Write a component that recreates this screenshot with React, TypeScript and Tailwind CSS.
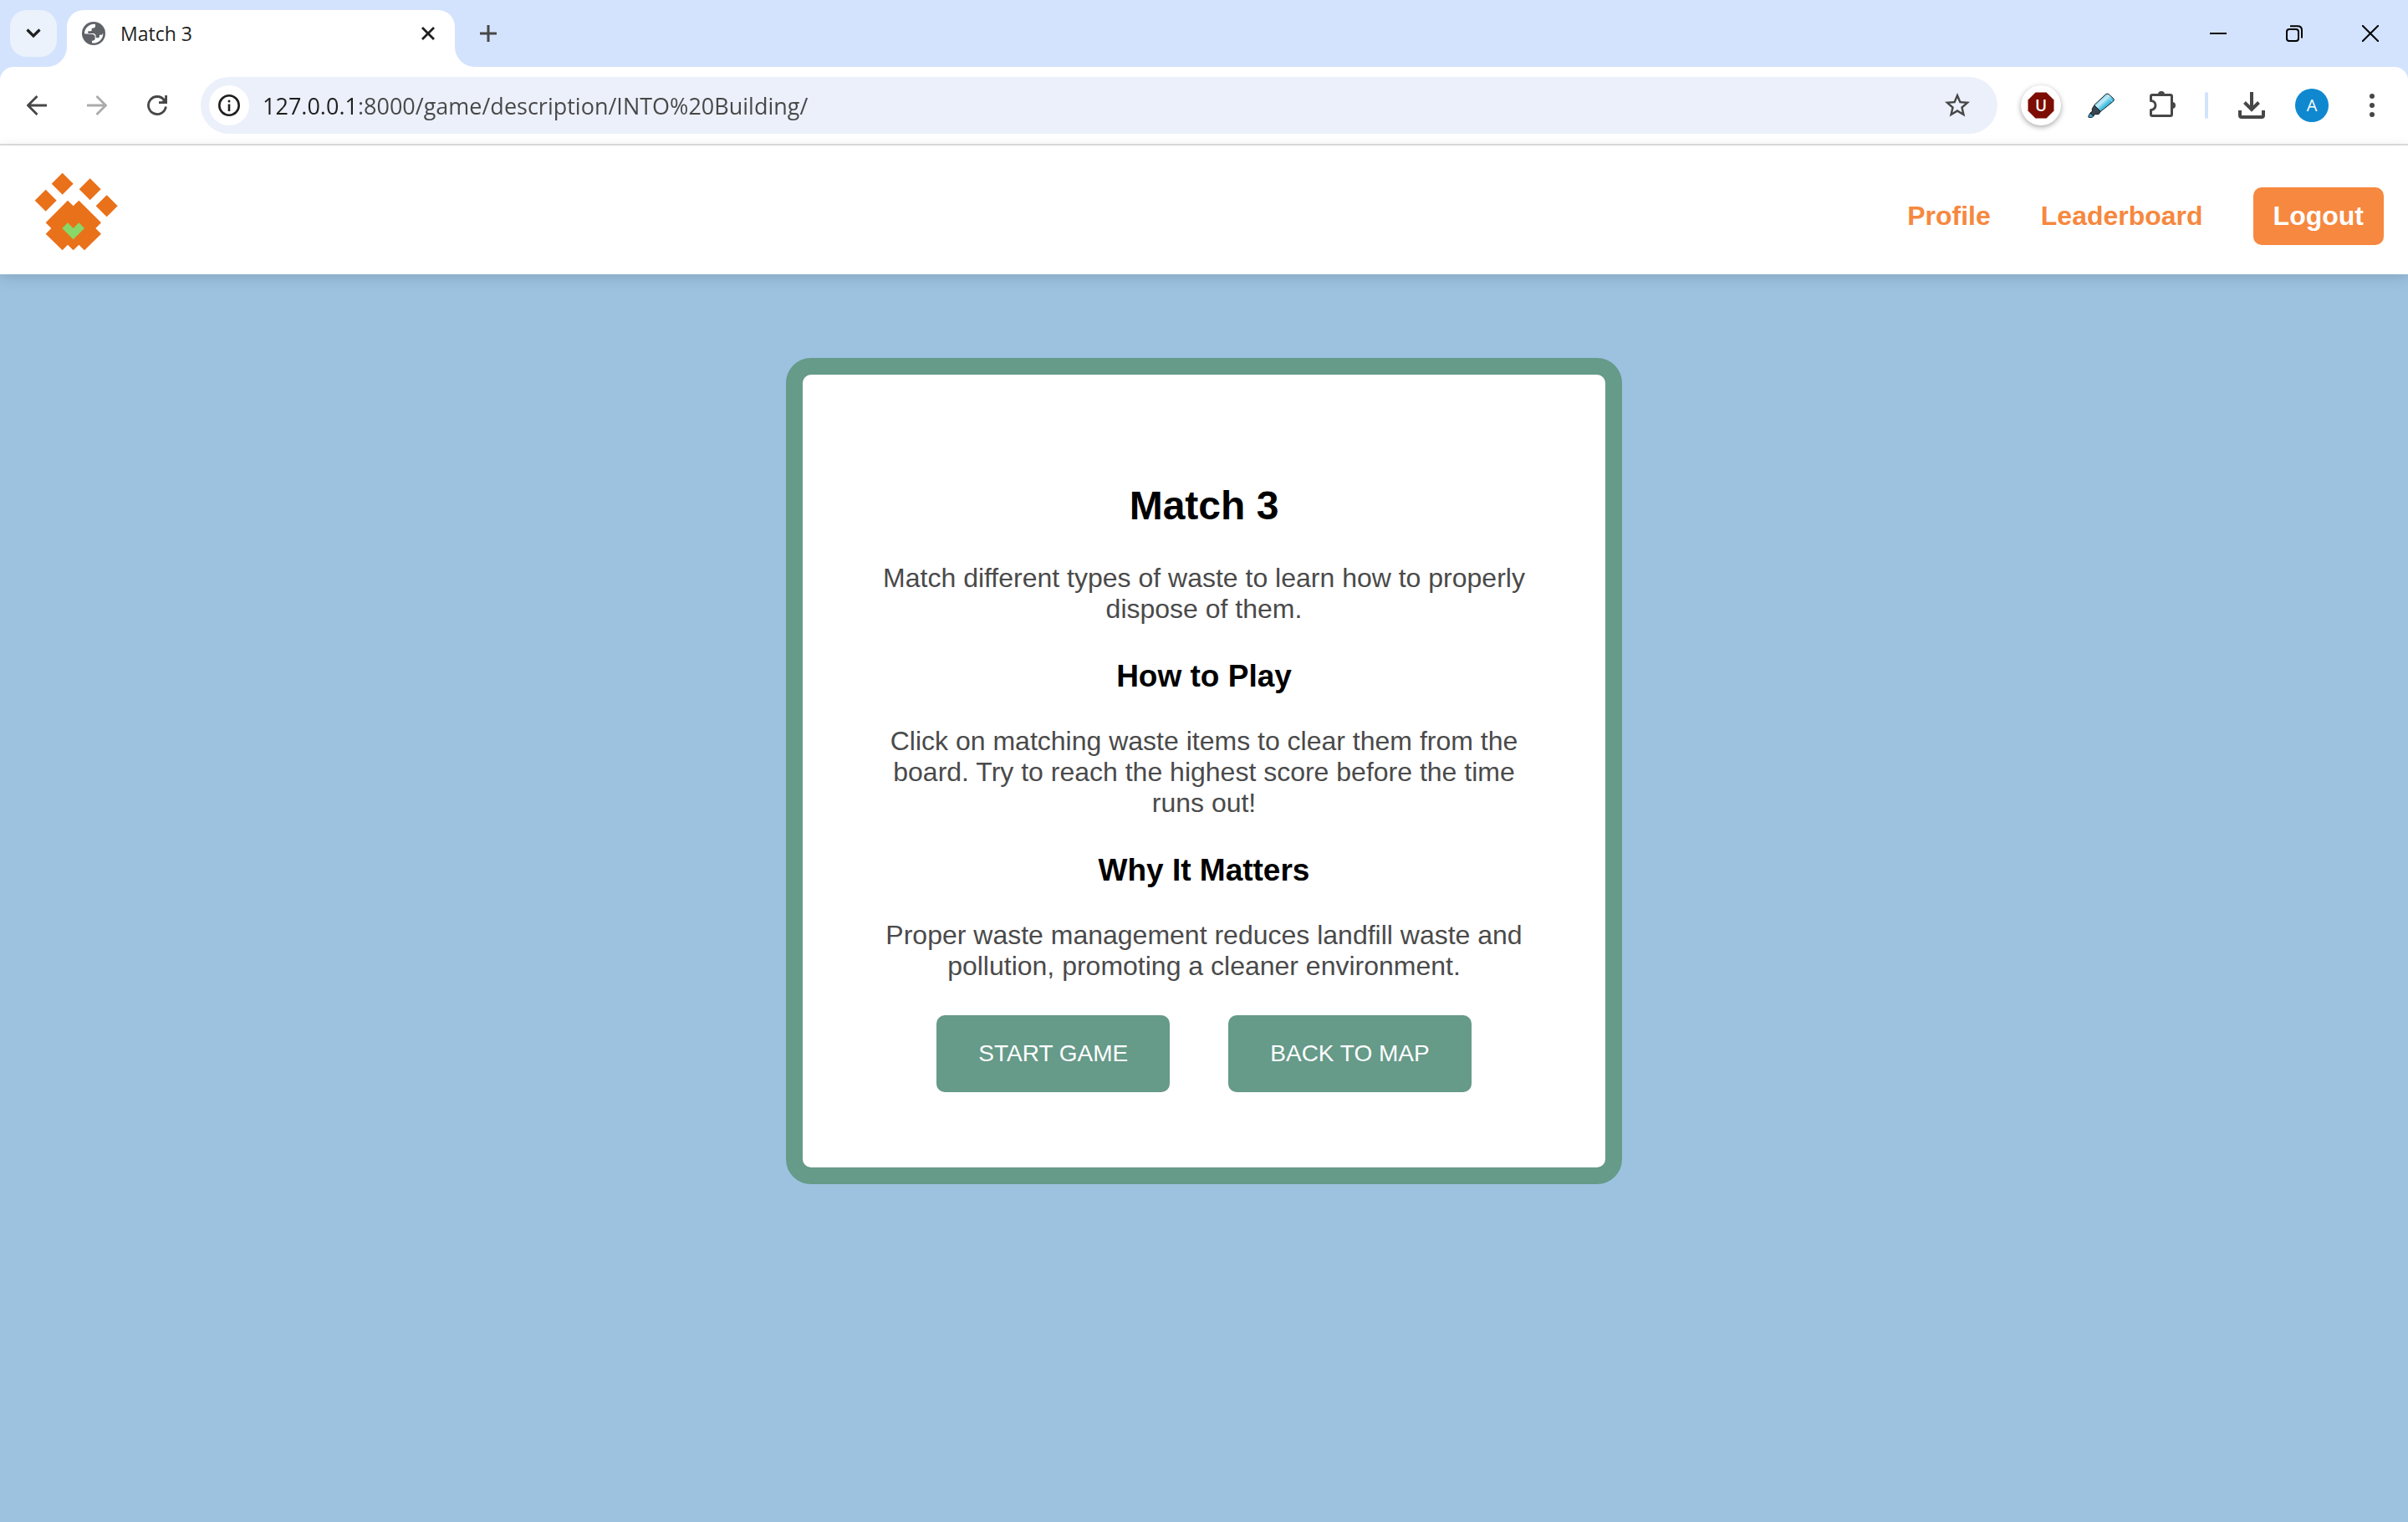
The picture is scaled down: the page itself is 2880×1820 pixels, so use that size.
import React from "react";
import { MdStarBorder } from "react-icons/md";

function TabFoot({ className, d }: { className: string; d: string }) {
  return (
    <svg aria-hidden="true" className={className} viewBox="0 0 24 24" width="24" height="24" fill="#ffffff">
      <path d={d} />
    </svg>
  );
}

function GlobeIcon() {
  return (
    <svg aria-hidden="true" viewBox="294 78 84 84" width="28" height="28" className="shrink-0">
      <circle cx="336" cy="120" r="42" fill="#5f6368" />
      <path
        fill="#ffffff"
        d="M342 87 V95 Q340 101 329 101 V109 Q329 112 325 112 H316 V120 H334 Q344 121 344 131 V136 H352 Q357 136 357 130 V125 H367 V121 H370 A34 34 0 0 1 330 154 V146 Q341 146 341 138 V131 Q340 124 332 123 L303 121 A34 34 0 0 1 342 87Z"
      />
    </svg>
  );
}

function ArrowIcon({ forward = false }: { forward?: boolean }) {
  return (
    <svg aria-hidden="true" viewBox="0 0 24 24" width="24" height="24" fill="none" stroke={forward ? "#ababab" : "#474747"} strokeWidth="2.8">
      <path d={forward ? "M0 12H22M11.5 1L22.5 12L11.5 23" : "M24 12H2M12.5 1L1.5 12L12.5 23"} />
    </svg>
  );
}

function ReloadIcon() {
  return (
    <svg aria-hidden="true" viewBox="0 0 24 24" width="24" height="24" fill="none" stroke="#474747" strokeWidth="2.8">
      <path d="M22.4 13.5A10.5 10.5 0 1 1 20.5 5.8" />
      <path d="M22.6 0V8.6H14" />
      <path d="M17 8L22 3V8Z" fill="#474747" stroke="none" />
    </svg>
  );
}

function InfoIcon() {
  return (
    <svg aria-hidden="true" viewBox="0 0 26 26" width="26" height="26">
      <circle cx="13" cy="13" r="11.7" fill="none" stroke="#1f1f1f" strokeWidth="2.6" />
      <circle cx="13" cy="8" r="1.5" fill="#1f1f1f" />
      <path d="M13 11.5V20" stroke="#1f1f1f" strokeWidth="2.6" />
    </svg>
  );
}

function BlockerIcon() {
  return (
    <svg aria-hidden="true" viewBox="0 0 32 32" width="32" height="32">
      <path d="M9.5 0.5H22.5L31.5 9.5V22.5L22.5 31.5H9.5L0.5 22.5V9.5Z" fill="#7d0d02" />
      <text x="16" y="22.5" textAnchor="middle" fontFamily="'Open Sans', sans-serif" fontSize="19" fontWeight="600" fill="#ffffff">
        U
      </text>
    </svg>
  );
}

function HighlighterIcon() {
  return (
    <svg aria-hidden="true" viewBox="0 0 96 90" width="32" height="30">
      <defs>
        <linearGradient id="marker" x1="0" y1="0" x2="1" y2="1">
          <stop offset="0.25" stopColor="#4fb9dc" />
          <stop offset="0.42" stopColor="#c9edf7" />
          <stop offset="0.6" stopColor="#45c0e2" />
          <stop offset="0.8" stopColor="#2fa9d0" />
        </linearGradient>
      </defs>
      <path d="M2 85L9 72L22 82L16 88H3Z" fill="#43aed2" stroke="#151a20" strokeWidth="3" />
      <path d="M9 72L16 67V56L24 45L46 66L40 76L26 77L19 83Z" fill="#3a4550" stroke="#151a20" strokeWidth="3" />
      <path d="M23 44L65 5Q70 1 75 5L92 20Q96 25 92 30L46 67Z" fill="url(#marker)" stroke="#151a20" strokeWidth="3" />
      <path d="M64 10L88 31" stroke="#a5deee" strokeWidth="3" />
    </svg>
  );
}

function PuzzleIcon() {
  return (
    <svg aria-hidden="true" viewBox="0 0 36 36" width="36" height="36">
      <path
        d="M5.5 12.5V7.2Q5.5 5.5 7.2 5.5H28.8Q30.5 5.5 30.5 7.2V28.8Q30.5 30.5 28.8 30.5H7.2Q5.5 30.5 5.5 28.8V23.5A5.5 5.5 0 0 0 5.5 12.5Z"
        fill="none"
        stroke="#474747"
        strokeWidth="3"
        strokeLinejoin="round"
      />
      <path d="M14 5A4 4 0 0 1 22 5ZM31 14A4 4 0 0 1 31 22Z" fill="#474747" />
    </svg>
  );
}

function DownloadIcon() {
  return (
    <svg aria-hidden="true" viewBox="0 0 32 32" width="32" height="32" fill="none" stroke="#474747" strokeWidth="4">
      <path d="M16 0V21M7.5 12.5L16 21L24.5 12.5" />
      <path d="M2 22V28Q2 30 4 30H28Q30 30 30 28V22" />
    </svg>
  );
}

function PawLogo() {
  return (
    <svg aria-hidden="true" viewBox="120 134 306 288" width="102" height="96">
      <g fill="#e9711a">
        <path d="M224 139L263 178L224 217L185 178Z" />
        <path d="M164 199L203 238L164 277L125 238Z" />
        <path d="M323 159L362 198L323 237L284 198Z" />
        <path d="M383 219L422 258L383 297L344 258Z" />
        <path d="M243 238L263 258L283 238L363 318L343 338L363 358L303 417L283 397L263 417L243 397L224 417L164 358L184 338L164 318Z" />
      </g>
      <path d="M243 318L263 338L283 318L303 338L263 378L223 338Z" fill="#89d768" />
    </svg>
  );
}

const toolButton = "flex h-[68px] w-[72px] shrink-0 items-center justify-center";
const windowButton = "flex h-20 w-[91px] items-center justify-center";

function TabStrip() {
  return (
    <div className="flex h-20 pt-3">
      <button aria-label="Search tabs" className="ml-3 flex size-14 items-center justify-center rounded-[20px] bg-[#ebf2fc]">
        <svg aria-hidden="true" viewBox="0 0 18 12" width="18" height="12" fill="none" stroke="#1f1f1f" strokeWidth="3.2">
          <path d="M1.5 1.5L9 9L16.5 1.5" />
        </svg>
      </button>
      <div className="relative ml-3 flex w-[464px] items-start rounded-t-[20px] bg-white">
        <TabFoot className="absolute bottom-0 -left-6" d="M24 0V24H0A24 24 0 0 0 24 0Z" />
        <TabFoot className="absolute -right-6 bottom-0" d="M0 0V24H24A24 24 0 0 1 0 0Z" />
        <div className="flex h-14 flex-1 items-center pl-[18px]">
          <GlobeIcon />
          <span className="flex-1 pl-[18px] text-[23px] leading-8 text-[#1f1f1f]">Match 3</span>
          <button aria-label="Close tab" className="flex h-14 w-16 items-center justify-center">
            <svg aria-hidden="true" viewBox="0 0 16 16" width="16" height="16" stroke="#1f1f1f" strokeWidth="2.8">
              <path d="M1 1L15 15M15 1L1 15" />
            </svg>
          </button>
        </div>
      </div>
      <button aria-label="New tab" className="ml-3 flex size-14 items-center justify-center">
        <svg aria-hidden="true" viewBox="0 0 20 20" width="20" height="20" stroke="#474747" strokeWidth="3">
          <path d="M10 0V20M0 10H20" />
        </svg>
      </button>
      <div className="-mt-3 ml-auto flex">
        <button aria-label="Minimize" className={windowButton}>
          <svg aria-hidden="true" viewBox="0 0 20 20" width="20" height="20" stroke="#000000" strokeWidth="2">
            <path d="M0 10H20" />
          </svg>
        </button>
        <button aria-label="Restore" className={windowButton}>
          <svg aria-hidden="true" viewBox="0 0 20 20" width="20" height="20" fill="none" stroke="#000000" strokeWidth="2">
            <rect x="1" y="5" width="14" height="14" rx="3" />
            <path d="M5 1.2H14Q19 1.2 19 6V15.5" />
          </svg>
        </button>
        <button aria-label="Close" className={windowButton}>
          <svg aria-hidden="true" viewBox="0 0 20 20" width="20" height="20" stroke="#000000" strokeWidth="2">
            <path d="M0 0L20 20M20 0L0 20" />
          </svg>
        </button>
      </div>
    </div>
  );
}

function Toolbar() {
  return (
    <div className="flex items-center rounded-t-2xl border-b-2 border-[#e0e0e0] bg-white py-3 pr-[7px] pl-2">
      <button aria-label="Back" className={toolButton}>
        <ArrowIcon />
      </button>
      <button aria-label="Forward" className={toolButton}>
        <ArrowIcon forward />
      </button>
      <button aria-label="Reload" className={toolButton}>
        <ReloadIcon />
      </button>
      <div className="mx-4 flex h-[68px] min-w-0 flex-1 items-center rounded-full bg-[#ebf0fa] pl-[10px]">
        <button aria-label="Site information" className="flex size-12 shrink-0 items-center justify-center rounded-full bg-white">
          <InfoIcon />
        </button>
        <input
          aria-label="Address"
          type="text"
          defaultValue="127.0.0.1:8000/game/description/INTO%20Building/"
          className="ml-4 h-12 min-w-0 flex-1 bg-[linear-gradient(90deg,#1f1f1f_108px,#474747_108px)] bg-clip-text text-[27px] text-transparent outline-none"
        />
        <button aria-label="Bookmark this tab" className="flex h-[68px] w-24 items-center justify-center">
          <MdStarBorder size={36} color="#474747" />
        </button>
      </div>
      <button aria-label="Content blocker" className={toolButton}>
        <span className="flex size-12 items-center justify-center rounded-full bg-white shadow-[0_2px_6px_rgba(0,0,0,0.35)]">
          <BlockerIcon />
        </span>
      </button>
      <button aria-label="Highlighter" className={toolButton}>
        <HighlighterIcon />
      </button>
      <button aria-label="Extensions" className={toolButton}>
        <PuzzleIcon />
      </button>
      <div className="flex w-9 shrink-0 justify-center">
        <div className="h-8 w-1 rounded-full bg-[#d3e3fd]" />
      </div>
      <button aria-label="Downloads" className={toolButton}>
        <DownloadIcon />
      </button>
      <button aria-label="Account" className={toolButton}>
        <span className="flex size-10 items-center justify-center rounded-full bg-[#0f88cf] text-xl text-white">A</span>
      </button>
      <button aria-label="Menu" className={toolButton}>
        <svg aria-hidden="true" viewBox="0 0 6 28" width="6" height="28" fill="#474747">
          <circle cx="3" cy="3" r="3" />
          <circle cx="3" cy="14" r="3" />
          <circle cx="3" cy="25" r="3" />
        </svg>
      </button>
    </div>
  );
}

function SiteHeader() {
  return (
    <header className="relative flex items-start justify-between bg-white pr-[29px] pl-10 shadow-[0_4px_16px_rgba(0,0,0,0.14)]">
      <a href="#home" aria-label="Home" className="pt-[31px]">
        <PawLogo />
      </a>
      <nav className="flex items-center gap-[60px] pt-[50px] pb-[35px] text-[32px] leading-[37px] font-bold text-[#f6883f]">
        <a href="#profile">Profile</a>
        <a href="#leaderboard">Leaderboard</a>
        <button className="rounded-[10px] bg-[#f6883f] px-6 py-4 text-white">Logout</button>
      </nav>
    </header>
  );
}

const sections = [
  {
    title: "How to Play",
    text: "Click on matching waste items to clear them from the board. Try to reach the highest score before the time runs out!",
  },
  {
    title: "Why It Matters",
    text: "Proper waste management reduces landfill waste and pollution, promoting a cleaner environment.",
  },
];

function GameCard() {
  return (
    <section className="w-full max-w-[1000px] rounded-[30px] border-[20px] border-[#669a89] bg-white px-[90px] pt-[129px] pb-[90px] text-center text-[#4a4a4a]">
      <h1 className="text-[48px] leading-[56px] font-bold text-black">Match 3</h1>
      <p className="mt-10 text-[32px] leading-[37px]">Match different types of waste to learn how to properly dispose of them.</p>
      {sections.map((s) => (
        <React.Fragment key={s.title}>
          <h2 className="mt-10 text-[37px] leading-[43px] font-bold text-black">{s.title}</h2>
          <p className="mt-[38px] text-[32px] leading-[37px]">{s.text}</p>
        </React.Fragment>
      ))}
      <div className="mt-10 flex justify-center gap-[70px] text-[28px] leading-8 text-white">
        <button className="rounded-[10px] bg-[#669a89] px-[50px] py-[30px]">START GAME</button>
        <button className="rounded-[10px] bg-[#669a89] px-[50px] py-[30px]">BACK TO MAP</button>
      </div>
    </section>
  );
}

export default function App() {
  return (
    <div className="flex min-h-screen flex-col bg-[#9cc2e0] font-['Liberation_Sans',Arial,sans-serif]">
      <div className="bg-[#d3e3fd] font-['Open_Sans',sans-serif]">
        <TabStrip />
        <Toolbar />
      </div>
      <SiteHeader />
      <main className="flex flex-1 items-start justify-center pt-[100px]">
        <GameCard />
      </main>
    </div>
  );
}
